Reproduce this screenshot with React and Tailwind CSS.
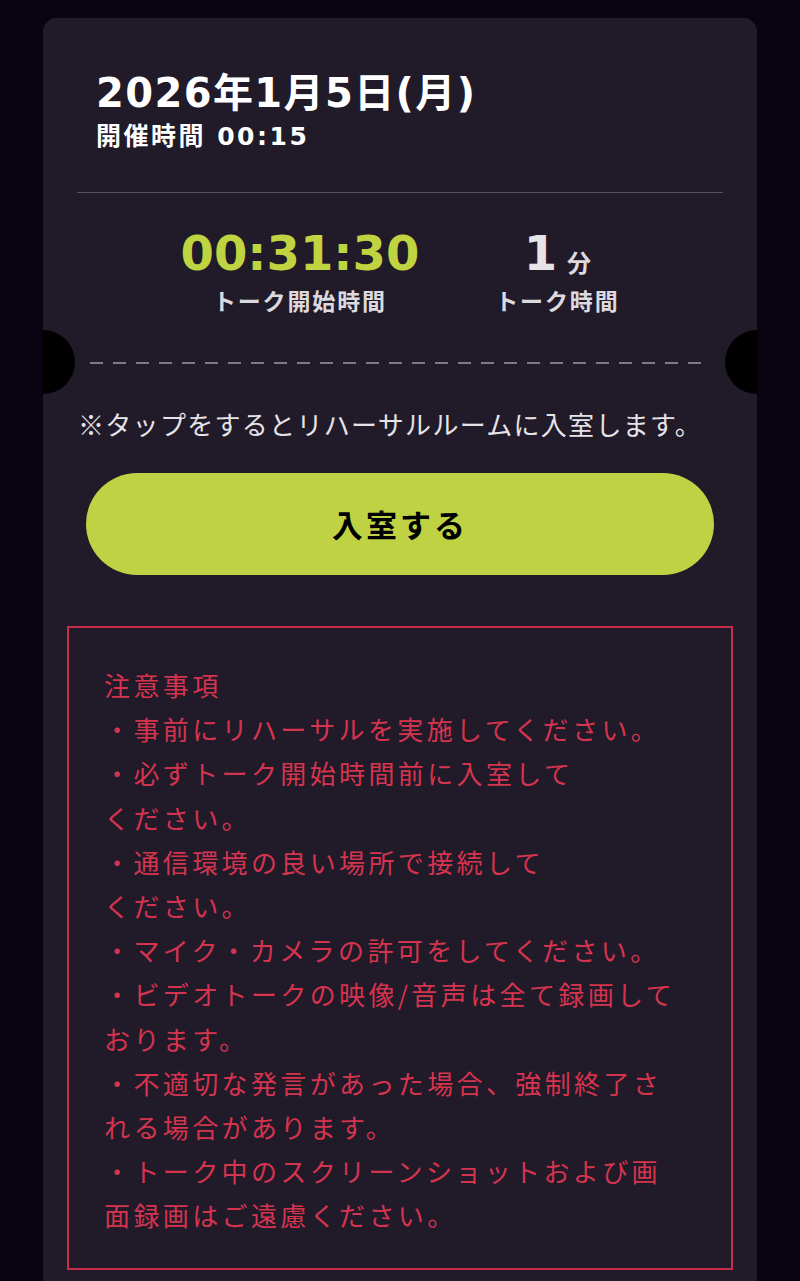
import React from "react";

const jp = { fontFamily: '"Noto Sans CJK JP", "Noto Sans", sans-serif' };
const num = { fontFamily: '"DejaVu Sans", "Noto Sans CJK JP", sans-serif' };

const notices = [
  "注意事項",
  "・事前にリハーサルを実施してください。",
  "・必ずトーク開始時間前に入室して",
  "ください。",
  "・通信環境の良い場所で接続して",
  "ください。",
  "・マイク・カメラの許可をしてください。",
  "・ビデオトークの映像/音声は全て録画して",
  "おります。",
  "・不適切な発言があった場合、強制終了さ",
  "れる場合があります。",
  "・トーク中のスクリーンショットおよび画",
  "面録画はご遠慮ください。",
];

export default function App() {
  return (
    <div className="min-h-[1281px] bg-[#0a0412] pt-[18px] px-[43px]" style={jp}>
      <div className="relative overflow-hidden rounded-t-[14px] bg-[#211a29] pb-[60px]">
        {/* ticket notches */}
        <div className="absolute left-[-32px] top-[312px] h-[64px] w-[64px] rounded-full bg-black" />
        <div className="absolute right-[-32px] top-[312px] h-[64px] w-[64px] rounded-full bg-black" />

        {/* header */}
        <div className="px-[53px] pt-[51px]">
          <div className="text-[40px] leading-[48px] font-bold tracking-[0.035em] text-white" style={num}>
            2026年1月5日(月)
          </div>
          <div className="mt-[4px] text-[25px] leading-[32px] font-bold tracking-[0.1em] text-white" style={num}>
            開催時間 00:15
          </div>
        </div>

        <div className="mx-[34px] mt-[39px] h-px bg-[#55505b]" />

        {/* timer */}
        <div className="mt-[34px] flex justify-center gap-[76px]">
          <div className="flex flex-col items-center">
            <div className="h-[52px] text-[48px] leading-[52px] font-bold text-[#c0d341]" style={num}>
              00:31:30
            </div>
            <div className="mt-[6px] h-[30px] text-[23px] leading-[30px] font-bold tracking-[0.08em] text-[#dcd9df]">
              トーク開始時間
            </div>
          </div>
          <div className="flex flex-col items-center">
            <div className="flex h-[52px] items-end">
              <span className="text-[48px] leading-[52px] font-bold text-[#e6e4e8]" style={num}>1</span>
              <span className="ml-[10px] mb-[2px] text-[24px] leading-[30px] font-bold text-[#dcd9df]">分</span>
            </div>
            <div className="mt-[6px] h-[30px] text-[23px] leading-[30px] font-bold tracking-[0.08em] text-[#dcd9df]">
              トーク時間
            </div>
          </div>
        </div>

        {/* dashed separator */}
        <div className="mx-[47px] mt-[47px] h-[2px] bg-[repeating-linear-gradient(90deg,#7d7883_0_13px,transparent_13px_23px)]" />

        {/* note */}
        <div className="mt-[42px] px-[35px] text-[26px] leading-[36px] tracking-[0.05em] text-[#e6e4e8] whitespace-nowrap">
          ※タップをするとリハーサルルームに入室します。
        </div>

        {/* enter button */}
        <div className="mt-[31px] px-[43px]">
          <button className="flex h-[102px] w-full items-center justify-center rounded-full bg-[#bfd243] text-[31px] font-bold tracking-[0.1em] text-black" style={jp}>
            入室する
          </button>
        </div>

        {/* notice box */}
        <div className="mx-[24px] mt-[51px] border-2 border-[#c52f49] pl-[35px] pr-[10px] pt-[35px] pb-[30px]">
          {notices.map((line, i) => (
            <div key={i} className="whitespace-nowrap text-[26px] leading-[44.2px] tracking-[0.13em] text-[#d5344f]">
              {line}
            </div>
          ))}
        </div>
      </div>
    </div>
  );
}
